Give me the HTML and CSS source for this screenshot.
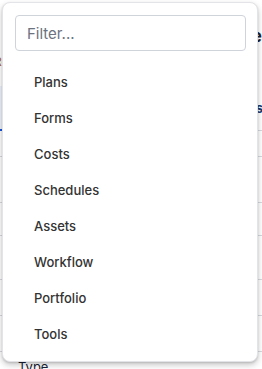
FILE: index.html
```html
<!DOCTYPE html>
<html lang="en">
<head>
    <meta charset="UTF-8">
    <meta name="viewport" content="width=device-width, initial-scale=1.0">
    <title>Modules</title>
    <link rel="stylesheet" href="styles.css">
</head>
<body>
    <div class="page">
        <div class="page-title">Project Overview Page</div>
        <div class="page-sub">Recent</div>
        <div class="tabs">
            <div class="tab active"></div>
            <div class="tab-right">Items</div>
        </div>
        <div class="rows">
            <div class="row"></div>
            <div class="row"></div>
            <div class="row"></div>
            <div class="row"></div>
            <div class="row"></div>
            <div class="row"></div>
            <div class="row last">Type</div>
        </div>
    </div>

    <div class="menu">
        <input type="text" class="menu-filter" placeholder="Filter...">
        <ul class="menu-list">
            <li class="menu-item">Plans</li>
            <li class="menu-item">Forms</li>
            <li class="menu-item">Costs</li>
            <li class="menu-item">Schedules</li>
            <li class="menu-item">Assets</li>
            <li class="menu-item">Workflow</li>
            <li class="menu-item">Portfolio</li>
            <li class="menu-item">Tools</li>
        </ul>
    </div>
</body>
</html>
```

FILE: styles.css
```css
* {
    margin: 0;
    padding: 0;
    box-sizing: border-box;
}

body {
    font-family: Inter, Roboto, "Noto Sans", Arial, sans-serif;
    background: #ffffff;
    color: #212121;
    width: 262px;
    height: 369px;
    overflow: hidden;
    position: relative;
}

/* page behind the dropdown */
.page {
    padding-top: 26px;
}

.page-title {
    font-size: 17px;
    font-weight: 700;
    color: #1a2233;
    white-space: nowrap;
    text-align: right;
    height: 20px;
    line-height: 20px;
    margin-left: -8px;
}

.page-sub {
    font-size: 12px;
    color: #b0622c;
    height: 28px;
    line-height: 28px;
    margin-left: -6px;
    padding-top: 2px;
}

.tabs {
    margin-top: 12px;
    height: 45px;
    display: flex;
    justify-content: space-between;
    align-items: center;
    font-size: 13px;
    font-weight: 700;
    color: #1e3a6e;
    border-bottom: 1px solid #d6d9de;
}

.tab.active {
    width: 60px;
    height: 45px;
    background: #eef3fb;
    border-bottom: 2px solid #1a56db;
}

.tab-right {
    margin-right: -1px;
}

.row {
    height: 26px;
    border-bottom: 1px solid #d6d9de;
}

.row:nth-child(2) { height: 46px; }
.row:nth-child(3) { height: 33px; }
.row:nth-child(4) { height: 44px; }
.row:nth-child(5) { height: 36px; }
.row:nth-child(6) { height: 36px; }

.row.last {
    border-bottom: none;
    padding: 7px 0 0 18px;
    font-size: 13px;
    color: #1a2233;
}

/* dropdown */
.menu {
    position: absolute;
    left: 2px;
    top: 2px;
    width: 256px;
    height: 360px;
    background: #ffffff;
    border: 1px solid #e3e4e8;
    border-radius: 8px;
    box-shadow: 0 3px 6px rgba(0, 0, 0, 0.22), 0 1px 2px rgba(0, 0, 0, 0.12);
    padding: 12px 11px 8px 12px;
}

.menu-filter {
    display: block;
    width: 100%;
    height: 36px;
    border: 1px solid #cfd3da;
    border-radius: 4px;
    padding: 0 11px;
    font-family: Inter, Roboto, "Noto Sans", Arial, sans-serif;
    font-size: 15px;
    color: #333;
    outline: none;
}

.menu-filter::placeholder {
    color: #6b7280;
}

.menu-list {
    list-style: none;
    margin-top: 13px;
}

.menu-item {
    height: 36px;
    line-height: 36px;
    padding-left: 19px;
    font-size: 13px;
    font-weight: 500;
    color: #333333;
}
```
